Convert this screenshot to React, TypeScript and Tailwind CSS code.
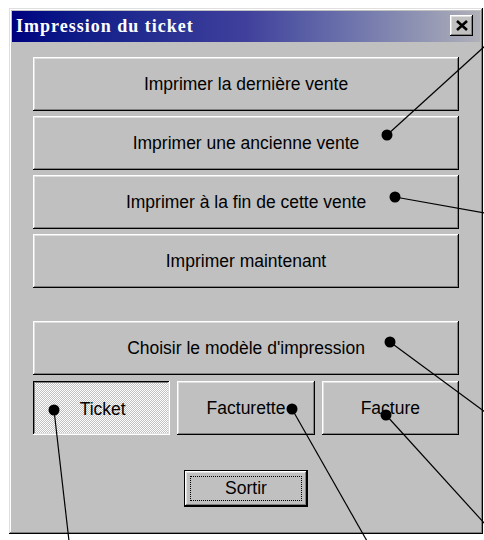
import React from "react";

const raised =
  "shadow-[inset_-1px_-1px_#000000,inset_1px_1px_#ffffff,inset_-2px_-2px_#808080,inset_2px_2px_#dfdfdf]";
const sunken =
  "shadow-[inset_-1px_-1px_#ffffff,inset_1px_1px_#000000,inset_-2px_-2px_#dfdfdf,inset_2px_2px_#808080]";

function WinButton({
  children,
  className = "",
  pressed = false,
}: {
  children: React.ReactNode;
  className?: string;
  pressed?: boolean;
}) {
  return (
    <div
      className={`flex items-center justify-center text-[17.5px] text-black ${
        pressed
          ? `${sunken} bg-[repeating-conic-gradient(#c0c0c0_0%_25%,#ffffff_0%_50%)] bg-[length:2px_2px] pl-[2px] pt-[2px]`
          : `${raised} bg-[#c0c0c0]`
      } ${className}`}
    >
      {children}
    </div>
  );
}

// callout lines drawn over the dialog
const callouts = [
  { dot: [387, 135], end: [485, 46] },
  { dot: [395, 197], end: [485, 213] },
  { dot: [390, 342], end: [485, 412] },
  { dot: [386, 415], end: [485, 524] },
  { dot: [292, 409], end: [367, 541] },
  { dot: [54, 410], end: [69, 541] },
];

export default function App() {
  return (
    <div className="relative w-[484px] h-[540px] overflow-hidden bg-white pl-[9px] pt-[8px] font-['Liberation_Sans',Arial,sans-serif]">
      <div className="flex h-[526px] w-[474px] flex-col bg-[#c0c0c0] p-[3px] shadow-[inset_-1px_-1px_#000000,inset_1px_1px_#dfdfdf,inset_-2px_-2px_#808080,inset_2px_2px_#ffffff]">
        {/* title bar */}
        <div className="flex h-[31px] items-start justify-between bg-linear-to-r from-[#000080] via-[#40409c] to-[#b0b0b8] pr-[7px]">
          <span className="self-center pl-[4px] font-['Liberation_Serif',serif] text-[18px] font-bold tracking-[1px] text-white">
            Impression du ticket
          </span>
          <div
            className={`mt-[4px] flex h-[21px] w-[23px] items-center justify-center bg-[#c0c0c0] ${raised}`}
          >
            <svg width="12" height="11" viewBox="0 0 12 11">
              <path d="M1 1L11 10M11 1L1 10" stroke="#000" strokeWidth="2.6" />
            </svg>
          </div>
        </div>

        {/* content */}
        <div className="flex flex-col px-[21px] pt-[15px]">
          <div className="flex flex-col gap-[5px]">
            <WinButton className="h-[54px]">Imprimer la dernière vente</WinButton>
            <WinButton className="h-[54px]">Imprimer une ancienne vente</WinButton>
            <WinButton className="h-[54px]">Imprimer à la fin de cette vente</WinButton>
            <WinButton className="h-[54px]">Imprimer maintenant</WinButton>
          </div>

          <WinButton className="mt-[33px] h-[54px]">Choisir le modèle d'impression</WinButton>

          <div className="mt-[6px] grid grid-cols-3 gap-[7px]">
            <WinButton pressed className="h-[54px]">
              Ticket
            </WinButton>
            <WinButton className="h-[54px]">Facturette</WinButton>
            <WinButton className="h-[54px]">Facture</WinButton>
          </div>

          <div className="mt-[35px] flex justify-center">
            <div className="flex h-[37px] w-[124px] items-center justify-center bg-[#c0c0c0] p-[6px] shadow-[inset_0_0_0_1px_#000000,inset_-2px_-2px_#000000,inset_2px_2px_#ffffff,inset_-3px_-3px_#808080,inset_3px_3px_#dfdfdf]">
              <div className="flex h-full w-full items-center justify-center border border-dotted border-black text-[17.5px] text-black">
                Sortir
              </div>
            </div>
          </div>
        </div>
      </div>

      <svg
        className="pointer-events-none absolute left-0 top-0"
        width="484"
        height="540"
        viewBox="0 0 484 540"
      >
        {callouts.map((c, i) => (
          <g key={i}>
            <line
              x1={c.dot[0]}
              y1={c.dot[1]}
              x2={c.end[0]}
              y2={c.end[1]}
              stroke="#000"
              strokeWidth="1.2"
            />
            <circle cx={c.dot[0]} cy={c.dot[1]} r="5.5" fill="#000" />
          </g>
        ))}
      </svg>
    </div>
  );
}
